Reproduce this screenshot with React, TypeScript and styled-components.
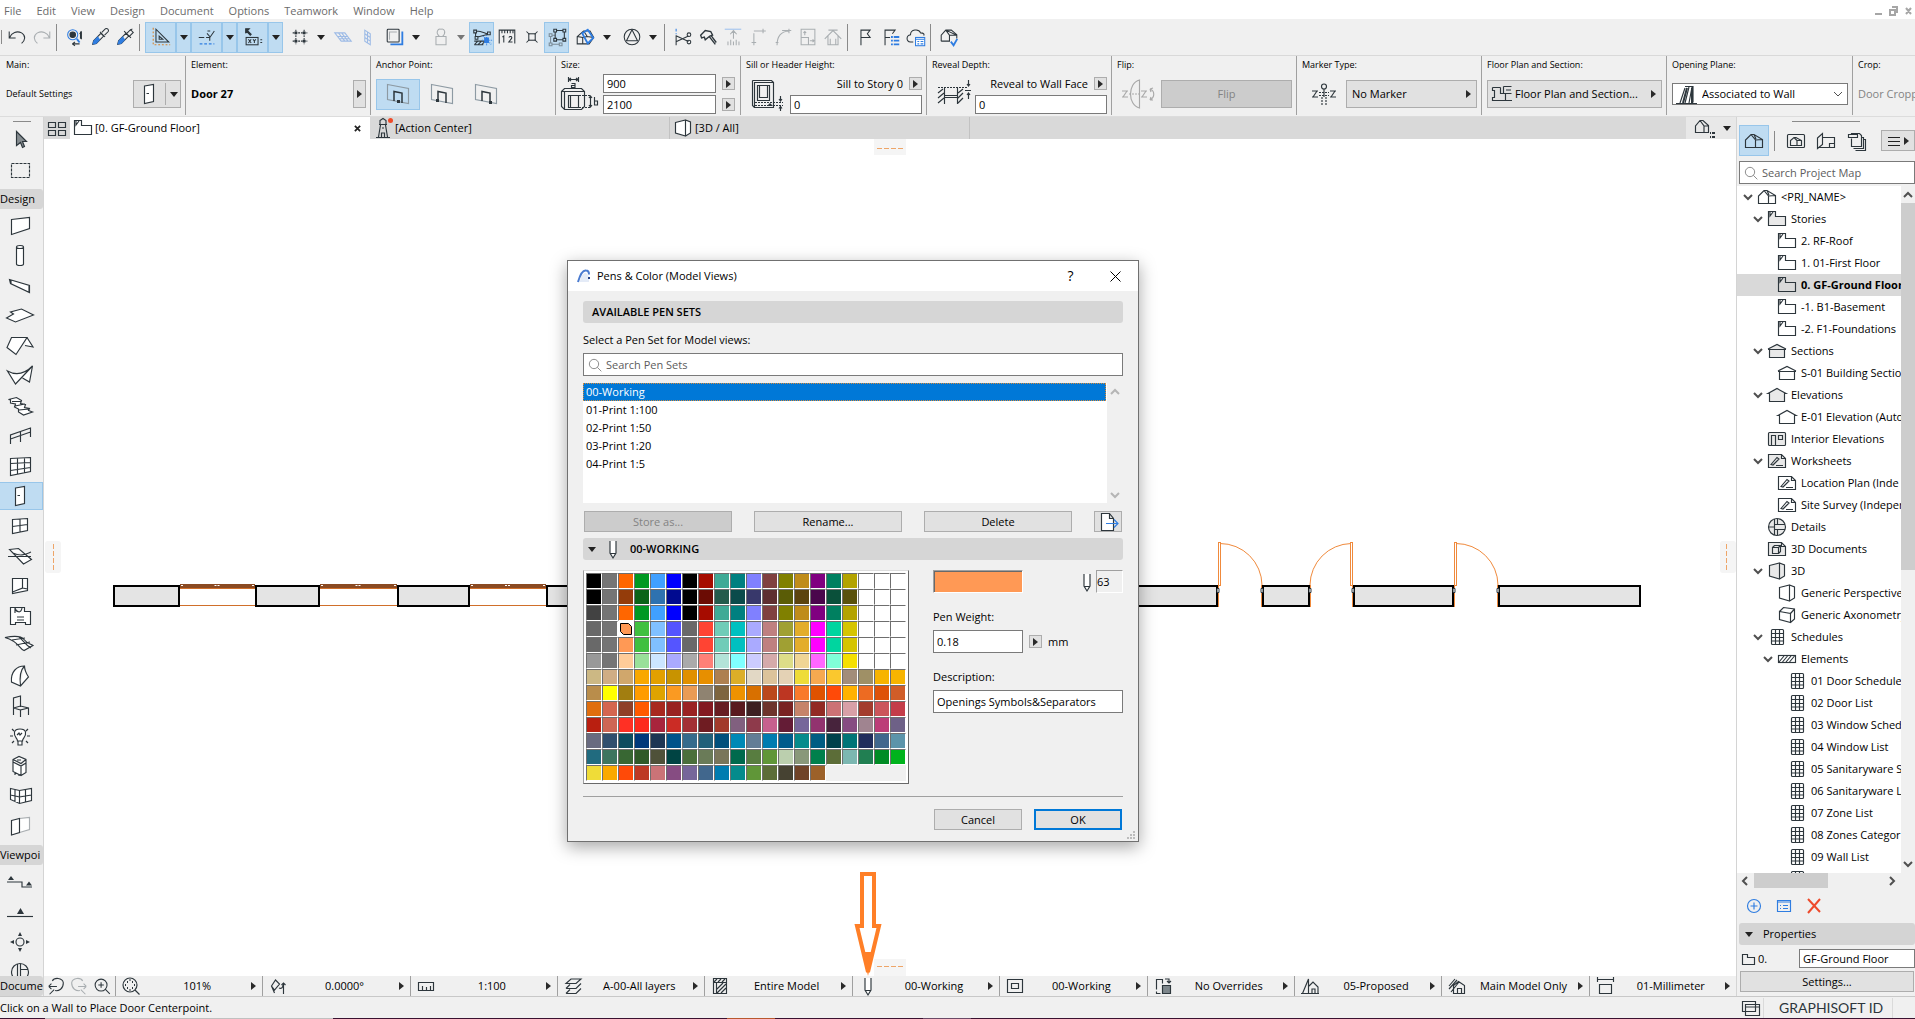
import React, { ReactNode } from "react";
import styled, { createGlobalStyle, css } from "styled-components";

const ink = "#2d363c";
const blue = "#2f7de1";
const pale = "#a9aeb1";
const face = "#f0f0f0";
const font = `"Open Sans", "Noto Sans", sans-serif`;

const Global = createGlobalStyle`
  *, *::before, *::after { box-sizing: border-box; }
  body { margin: 0; overflow: hidden; background: ${face}; }
  body, button, input, select { font-family: ${font}; font-size: 11px; line-height: 16px; color: #000; }
  button { padding: 0; margin: 0; border: 0; background: none; cursor: default; }
  ul { list-style: none; margin: 0; padding: 0; }
  h2, h3 { margin: 0; font-size: 11px; }
`;

/* ---------- icons ---------- */

const icons: Record<string, ReactNode> = {
  undo: <path d="M3.500 6v7h7M4 12.500C6 7 12 5 17 7.500c5 3 4 8 0 11.500" />,
  redo: <path stroke={pale} d="M20.500 6v7h-7M20 12.500C18 7 12 5 7 7.500c-5 3-4 8 0 11.500" />,
  pick: (
    <>
      <circle cx="9.500" cy="9.500" r="5.500" stroke={blue} />
      <circle cx="9.500" cy="9.500" r="3" fill={ink} />
      <path stroke={blue} strokeWidth="2" d="M14 14l3 4" />
      <path d="M17 8.500l2-2v8M18 6v8M9 19.500h8M9 19.500l3-2M9 19.500l3 2" />
    </>
  ),
  dropper: (
    <>
      <path d="M4 20l1-4 8-8 3 3-8 8zM12 6.500l5.500 5.500M14 7l4-4c2-1 4 1 3 3l-4 4" />
      <path fill={blue} stroke={blue} d="M4.500 19.500l1-3.500 4-4 2 3-4 4z" />
    </>
  ),
  syringe: (
    <>
      <path d="M4 20l1-4 8-8 3 3-8 8zM11 5.500l7.500 7.500M14 8l4-4 3 3-4 4M18 5l2-2" />
      <path fill={blue} stroke={blue} d="M4.500 19.500l1-3.500 4-4 2 3-4 4z" />
    </>
  ),
  setsquare: (
    <>
      <path stroke="#d9822b" strokeDasharray="2 2" d="M3.500 2v18.500H22" />
      <path d="M6.500 3.500v14h14zM10 11v3.500h4z" />
    </>
  ),
  snap: (
    <>
      <path d="M3 12.500h6M11 12.500h4V16M12 8l3.500 4L20 5.500M12.500 5.500h3" />
      <path stroke={blue} strokeDasharray="3 2" d="M4 19.500h16" />
    </>
  ),
  tracker: (
    <>
      <path fill={ink} d="M4 3h4l-2 2 4 4-1 1-4-4-1 2z" />
      <rect x="4.500" y="12.500" width="13" height="8" />
      <path d="M7 14.500l3 4M10 14.500l-3 4M12 14.500l1.500 2 1.500-2M13.500 16.500v2M20 15h2M20 18h2" />
    </>
  ),
  grid: (
    <>
      <path strokeDasharray="2 1" d="M4 7.500h16M4 16.500h16M7.500 4v16M16.500 4v16" />
      <path fill={ink} stroke="none" d="M6 6h3v3H6zM15 6h3v3h-3zM6 15h3v3H6zM15 15h3v3h-3z" />
    </>
  ),
  planeH: <path stroke="#9dbbe6" d="M3 7.500h11l7 9H10zM6 11.500h11M7 7.500l7 9M10.500 7.500l7 9M8 14h11" />,
  planeV: <path stroke="#9dbbe6" d="M8.500 4.500l6 4v12l-6-4zM11.500 6.500v12M8.500 8.500l6 4M8.500 12.500l6 4" />,
  layers: (
    <>
      <path stroke={blue} strokeWidth="2" d="M20 6v14H7" />
      <rect x="3.500" y="3.500" width="13" height="14" rx="1" />
      <path stroke={pale} d="M6 15V6.500h8" />
    </>
  ),
  weight: <path stroke={pale} d="M6.500 11.500h11v9h-11zM10.500 11.500c-5-4-2-9 1.500-8 4-1 6 4 1.500 8" />,
  suspend: (
    <>
      <path d="M3 4.500h3v3H3zM18 6.500h3v3h-3zM4.500 11.500h3v3h-3zM6 5.500c6 0 8 2 12 3M5 7.500v4M7.500 12l11-3M3.500 16.500h12M3.500 20.500h10M4 20l4-4M8 20l4-4M12 20l3-3" />
      <path fill={blue} stroke={blue} d="M15 13h4v5h-4z" />
      <path stroke={blue} strokeDasharray="1 1" d="M12 15.500h11M17 10v12M13 11l9 9" />
    </>
  ),
  ruler: <path d="M3.500 19V4.500h17V19M6.500 5v3M9.500 5v3M12.500 5v3M15.500 5v3M18.500 5v3M7 12l1.500-1v7M14 12.500c1-2 4-1 3 1l-3 4h4" />,
  cross: (
    <>
      <rect x="8.500" y="8.500" width="7" height="7" />
      <path d="M6 6l3 3M18 6l-3 3M6 18l3-3M18 18l-3-3" />
    </>
  ),
  group: (
    <>
      <path stroke="#7b8b97" d="M3.500 8.500h3v3h-3zM3.500 18.500h3v3h-3zM14.500 18.500h3v3h-3zM5 12v6M7 20h7M7 10h3" />
      <path d="M8.500 3.500h3v3h-3zM18.500 3.500h3v3h-3zM8.500 13.500h3v3h-3zM18.500 13.500h3v3h-3zM12 5h6M12 15h6M10 7v6M20 7v6" />
    </>
  ),
  cutbox: (
    <>
      <path d="M3.500 11.500l7-6 7 0 4 7-5 7h-13zM10.500 5.500l4 6 7 1M3.500 11.500l6 1v7M9.500 12.500l5-1" />
      <path stroke={blue} strokeWidth="2" d="M9 8l6-4 6 9-6 6z" />
    </>
  ),
  north: (
    <>
      <circle cx="12" cy="12" r="8.500" />
      <path d="M12 4l-6 12h12z" />
    </>
  ),
  scissors: (
    <>
      <path stroke={blue} strokeDasharray="3 2" d="M4.500 3v6" />
      <path d="M4.500 10v11M5 11l13 6M5 17l13-6" />
      <circle cx="18.500" cy="9.500" r="2" />
      <circle cx="18.500" cy="17.500" r="2" />
    </>
  ),
  tools: <path strokeWidth="1.500" d="M4 10l5-5 6 1 2 4-3 1-5 4-1-3-3 1zM13 11l7 9M15 10l6 8" />,
  adjust: (
    <>
      <path stroke="#9dc1ee" d="M3 3.500h18" />
      <path stroke={pale} d="M12.500 5v9M9 9l3.500-4L16 9M6.500 17v4M9.500 15v6M12.500 17v4M15.500 15v6M18.500 17v4" />
    </>
  ),
  corner: <path stroke={pale} d="M7.500 8v13M5 18h5M7.500 5.500h13M17.500 3v5" />,
  fillet: <path stroke={pale} d="M5.500 21c0-10 4-15 13-15.500M4 18h3M11 5h10M18.500 3v5" />,
  resize: <path stroke={pale} d="M4.500 3.500h15v17h-15zM4.500 12.500h8v8M8.500 10V6M7 7.500L8.500 6 10 7.500M14 16h5M17 14.500l1.500 1.500-1.500 1.500" />,
  roofing: <path stroke={pale} d="M3 14l9-9 9 9M6.500 11v9.500h11V11M7 4.500h10M9 14v6M15 14v6" />,
  flag: <path d="M6.500 21V4.500h10l-3 4 3 4h-10" />,
  flagList: (
    <>
      <path d="M5.500 21V4.500h11l-3 4M6 12.500h5" />
      <path stroke={blue} strokeWidth="2" d="M12 12h2M15 12h6M12 16h2M15 16h6M12 20h2M15 20h6" />
    </>
  ),
  cloud: (
    <>
      <path d="M9 17.500H6c-5-1-5-7 0-8 0-6 9-7 11-2 4 0 4 2 3.500 3" />
      <rect x="11.500" y="12.500" width="10" height="9" stroke={blue} fill="#fff" />
      <path stroke={blue} d="M12 14.500h9M13.500 17h2M17 17h3M13.500 19.500h2M17 19.500h3" />
    </>
  ),
  modelCheck: (
    <>
      <path d="M3.500 16.500V10l5-5.500h6l6 5v4M8.500 4.500l4 5.500v6.500h-9M12.500 10h8M8.500 4.500l12 5.500" />
      <path stroke={blue} strokeWidth="2" d="M14 17l3 4 4-7" />
    </>
  ),
  door: <path fill="#fff" d="M7.500 4l9-1.500v17l-9 2zM9.500 11.500h2.500" />,
  anchorMid: (
    <>
      <path stroke="#8d9aa3" d="M1.500 2.500l21 4v15l-21-4z" />
      <path strokeWidth="1.500" d="M8 19V9.500l8 1.500v10" />
      <path fill={ink} stroke="none" d="M11 18h3v3h-3z" />
    </>
  ),
  anchorLeft: (
    <>
      <path stroke="#8d9aa3" d="M1.500 2.500l21 4v15l-21-4z" />
      <path strokeWidth="1.500" d="M8 18V9.500l8 1.500v10" />
      <path fill={ink} stroke="none" d="M6 17h3v3H6z" />
    </>
  ),
  anchorRight: (
    <>
      <path stroke="#8d9aa3" d="M1.500 2.500l21 4v15l-21-4z" />
      <path strokeWidth="1.500" d="M8 19V9.500l8 1.500v8" />
      <path fill={ink} stroke="none" d="M15 19h3v3h-3z" />
    </>
  ),
  quad: <path d="M3.500 6.500h7v5h-7zM13.500 6.500h7v5h-7zM3.500 14.500h7v5h-7zM13.500 14.500h7v5h-7z" />,
  story: <path d="M3.500 4.500h7v5h10v9h-17zM5 5v4l3-4" />,
  storyFill: <path fill="#e9e9e9" d="M3.500 4.500h7v5h10v9h-17zM5 5v4l3-4" />,
  lighthouse: (
    <>
      <path d="M8 8.500h8M9 8V4.500l3-2 3 2V8M9.500 9l-2 12M14.500 9l2 12M5 21.500h14M10.500 21v-4h3v4M11 12h2" />
      <circle cx="19.500" cy="4.500" r="2.500" fill="#f04a28" stroke="none" />
    </>
  ),
  box3d: <path fill="#fff" d="M4.500 6.500l10-2.500v16l-10-3zM14.500 4l5 2v11l-5 3" />,
  box3dFill: <path fill="#e9e9e9" d="M4.500 6.500l10-2.500v16l-10-3zM14.500 4l5 2v11l-5 3" />,
  axo: <path fill="#fff" d="M4.500 8.500l11 2v9l-11-3zM4.500 8.500l4-4 11 1.500v10l-4 3.500M15.500 10.500l4-4.500" />,
  house: <path d="M3.500 18.500V11L9 5.500h3l8.500 5v8zM9 5.500l4.500 5.500v7.500M13.500 11l7-.5M12 5.500l2 4.500" />,
  houseList: (
    <>
      <path d="M4.500 16.500V10L9 4.500h3l5.500 5v7zM9 4.500l4 5.500v6.500M13 10h4.500" />
      <path strokeWidth="2" d="M19 17h1M21 17h3M19 21h1M21 21h3" />
    </>
  ),
  viewMap: (
    <>
      <rect x="3.500" y="5.500" width="17" height="13" rx="1" />
      <path d="M6.500 16.500v-5L10 8.500h2l5.500 3v5zM10 8.500l3 3v5M13 11.500h4.500" />
    </>
  ),
  layoutBook: <path d="M3.500 9l5-4.500v11l-5 4zM8.500 8.500h12v10h-5v-4h5M3.500 18.500h12" />,
  publisher: <path d="M7.500 5.500V4.500h8l2 2v11h-10V9.500M4.500 5.500h9v3h-9zM17.500 8.500h2v11h-10M19.500 10.500h2v11h-10" />,
  section: <path fill="#e9e9e9" d="M3 10l9-4.500 9 4.500M4.500 10.500v8h15v-8zM3 10.500h18" />,
  sectionItem: <path fill="#fff" d="M3 10l9-4.500 9 4.500M4.500 10.500v8h15v-8zM3 10.500h18" />,
  elevation: <path fill="#e9e9e9" d="M3 10.500h1.500v8h15v-8H21L12 5.500z" />,
  elevationItem: <path fill="#fff" d="M3 10.500h1.500v8h15v-8H21L12 5.500z" />,
  interior: (
    <>
      <rect x="3.500" y="5.500" width="17" height="13" rx="1" fill="#e9e9e9" />
      <path d="M6.500 18.500v-10h4v10M13.500 8.500h4v4h-4z" />
    </>
  ),
  worksheet: <path fill="#e9e9e9" d="M3.500 5.500h13l4 4v9h-17zM6 15.500l6-7 2 1.500-6 6zM11 16.500h7M16.500 5.500v4h4" />,
  worksheetItem: <path fill="#fff" d="M3.500 5.500h13l4 4v9h-17zM6 15.500l6-7 2 1.500-6 6zM11 16.500h7M16.500 5.500v4h4" />,
  detail: (
    <>
      <circle cx="12" cy="12" r="8.500" fill="#e9e9e9" />
      <path d="M9.500 4v16M12.500 4v5.500M12.500 14.500V20M9.500 9.500h10.500M9.500 14.500h10.500M4 12h5" />
    </>
  ),
  doc3d: <path fill="#e9e9e9" d="M3.500 5.500h13l4 4v9h-17zM7.500 10.500h6v6h-6zM7.500 10.500l2-2h6l-2 2M15.500 8.500v6l-2 2M16.500 5.500v4h4" />,
  schedule: (
    <>
      <rect x="6.500" y="4.500" width="12" height="15" rx="1" />
      <path d="M6.500 8.500h12M6.500 12.500h12M6.500 16h12M10.500 4.500v15M14.500 4.500v15" />
    </>
  ),
  hatch: (
    <>
      <rect x="3.500" y="8.500" width="17" height="7" />
      <path d="M4 15l5-6M7.500 15l5-6M11 15l5-6M14.500 15l5-6" />
    </>
  ),
  arrow: <path fill="#858c90" d="M8.500 3.500v14l4-3 2 5 2-1-2-5h4z" />,
  marquee: <path strokeDasharray="3 1" d="M3.500 5.500h18v14h-18z" />,
  wall: <path fill="#fff" d="M3.500 5.500l18-2v11l-18 6z" />,
  column: <path fill="#fff" d="M8.500 3v17c0 2 7 2 7 0V3c0-2-7-2-7 0c0 2 7 2 7 0" />,
  beam: <path fill="#fff" d="M1.500 5.500l20 6v7l-19-9zM3 6v4M21 12v6" />,
  slab: <path fill="#fff" d="M-1.500 14l7-4-3-2 11-3 12 6-18 7z" />,
  roof: <path fill="#fff" d="M3.500 3.500h15.500l-11 17-9-7zM19 3.500l6 9.500-8-1.500" />,
  shell: <path fill="#fff" d="M-.5 7c9 5 18 2 25-5L7.500 20zM24.500 2l-3 16-7-4" />,
  stair: <path fill="#fff" d="M.5 5.500l8-2 5 3-1 3 5 1-1 3 5 1-1 2 4 1.500-9 3-5-3 0-3-4-2 1-3-5-1 0-3zM4 7.500h9M7 12l10-2M11 16l10-1" />,
  railing: <path d="M2.500 20v-9l20-7v9M2.500 15l20-7M12.500 8v10" />,
  curtain: <path fill="#fff" d="M2.500 4.500l20-1v14l-20 4zM9.500 4v16M16.500 4v14.500M2.500 9.500l20-1M2.500 16.500l20-3" />,
  window: <path fill="#fff" d="M4.500 5.500l15-1v12l-15 3zM12 5v13.500M4.500 12.500l15-2" />,
  skylight: <path fill="#fff" d="M1.500 5.500l9-1 13 11-8 4.500zM5 9c8 4 13 1 18-1M0 12.500l23 0" />,
  opening: <path fill="#fff" d="M4.500 4.500h15v12l-15 3zM14.500 4.500v9.500l-10 4M14.500 14l5 1" />,
  zone: <path fill="#fff" d="M2.500 3.500h14v4h6v13h-5v-2h-10v2h-5zM9 13h7M9 16h7M7 4c1 4 6 6 7 0M7 4v5" />,
  mesh: <path fill="#fff" d="M-3 3.500c10-2 16-2 19 2s6 4 9 6l-9 5c-5-2-5-9-19-13zM4 6l13-2M8 11l14-3M11 3c4 3 6 8 12 11" />,
  morph: <path fill="#fff" d="M3.500 18c-1-10 5-16 13-16 0 4 2 8 4 11l-8 9zM16.500 2c-5 5-5 12-4 20" />,
  chair: <path d="M5.500 21V4l7-2v11M5.500 14l7-2 8 2v7M12.500 23v-7l8-2M5.500 14l7 2" />,
  lamp: (
    <>
      <path fill="#fff" d="M9.500 17c0-3-4-4-3-9 1-4 10-4 11 0 1 5-3 6-3 9zM10 17v4h4v-4M9 11l2-2 1 2 2-2" />
      <path d="M2 12h3M19 12h3M4 5l2 2M20 5l-2 2M4 19l2-2M20 19l-2-2" />
    </>
  ),
  equipment: <path fill="#fff" d="M5 5.500l6-3 7 3v13l-5 3-8-4zM5 8l8 4 5-3M13 12v9M5 5.500l8 4 5-4M9 6h4M7 18v3M11 20v2" />,
  curtainCorner: <path fill="#fff" d="M2.500 4.500l9 2 12-2v12l-12 3-9-4zM11.500 6.500v13M7 5.500v12.500M17.500 5.500v12.500M2.500 11l9 2 12-2" />,
  panel: (
    <>
      <path stroke={pale} fill="#fff" d="M11.500 4.500l10-1v12l-10 3" />
      <path fill="#fff" d="M3.500 6.500l8-2v14l-8 2.500z" />
    </>
  ),
  secTool: (
    <>
      <path d="M-1 12h15v5h10" />
      <path fill={ink} stroke="none" d="M0 10l3-4 3 4zM18 15.500l3-4 3 4z" />
    </>
  ),
  elevTool: (
    <>
      <path d="M-1 16.500h26" />
      <path fill={ink} stroke="none" d="M9 14l3.500-6 3.500 6z" />
    </>
  ),
  ieTool: (
    <>
      <circle cx="12" cy="12" r="4" />
      <path fill={ink} stroke="none" d="M10 6l2-4 2 4zM10 18l2 4 2-4zM6 10l-4 2 4 2zM18 10l4 2-4 2z" />
    </>
  ),
  wsTool: (
    <>
      <circle cx="12" cy="12" r="8.500" />
      <path d="M9.500 4v16M12.500 4v16M12.500 9.500h7.500" />
    </>
  ),
  size: (
    <>
      <path d="M7.500 1v5M17.500 1v5M8 3.500h9M10 2L8 3.500 10 5M15 2l2 1.500L15 5M10.500 7.500h3.500v4h-3.500v-2h3.500" />
      <path d="M.5 15.500l3-3h17l3 3v15l-3 3h-17l-3-3zM.5 15.500h23M3.500 15.500v18M7.500 19.500h10v12h-10zM9.500 19.500v12" />
      <path strokeDasharray="2 1" d="M18 19.500h12M18 31.500h12" />
      <path d="M29.500 20v11M28 22l1.500-2 1.500 2M28 29l1.500 2 1.500-2M33.500 21v8h3v-4h-3" />
    </>
  ),
  sill: (
    <>
      <path d="M3.500 5.500h19v25h-19zM1.500 3.500h19l2 2M1.500 3.500v25l2 2M6.500 8.500h12v15h-12zM8.500 8.500h8v12h-8z" />
      <path strokeDasharray="2 1" d="M4 25.500h28M4 28.500h28" />
      <path d="M29.500 19v5M28 22l1.500 2 1.500-2M29.500 30v4M28 31.500l1.500-2 1.500 2" />
      <path fill={ink} stroke="none" d="M16 29l3-3 3 3z" />
    </>
  ),
  reveal: (
    <>
      <path strokeDasharray="2 1" d="M1 8.500h30" />
      <path d="M7.500 9v16M20.500 9v16M7.500 16.500h13M7.500 18.500h13M1 14l5-4M1 19l6-5M1 24l6-5M21 14l5-4M21 19l5-5M21 24l5-5M31.500 1v6M30 5l1.500 2L33 5M31.500 14v6M30 16l1.500-2 1.500 2M28 11.500h6" />
    </>
  ),
  flip: (
    <g stroke="#a8a8a8">
      <path d="M1 15h6M1 21h6M6 15l-4 6M20 15h6M20 21h6M25 15l-4 6M18.500 4v28c-12-3-12-25 0-28z" />
      <path strokeDasharray="2 1" d="M8 18h12" />
      <path d="M29 13c5 2 5 8 0 11M29 13l3-1M29 13l1 3M29 24l3 0M29 24l1-3" />
    </g>
  ),
  marker: (
    <>
      <path d="M1 8h6M1 14h6M6 8l-4 6M19 8h6M19 14h6M24 8l-4 6M13 6v8" />
      <path strokeDasharray="2 1" d="M8 9.500h10M8 12.500h10M11 14v8M15 14v8" />
      <circle cx="13" cy="3.500" r="2.500" />
    </>
  ),
  planSection: <path d="M2.500 5.500h8M2.500 5.500v3l2 0v7l-2 0v3h8M13.500 4.500h8M13.500 4.500v7h8M15.500 11.500v7M10 18.500h12M21 8h-5M10.500 5.500v6h3" />,
  openingPlane: (
    <>
      <path d="M1 21.500h21M5 21l5-15M10 21l4-16M14 21l3-16M10 4.500h8v16" />
      <path strokeWidth="2" d="M8 21l4-15M17 6v15" />
    </>
  ),
  zoomBack: <path d="M4 12.500h9M4 12.500l3-3M4 12.500l3 3M8 6.500c2-4 11-4 12 2 0 7-5 9-9 8.500M10 16l-5 5" />,
  zoomFwd: <path stroke={pale} d="M20 12.500h-9M20 12.500l-3-3M20 12.500l-3 3M16 6.500c-2-4-11-4-12 2 0 7 5 9 9 8.500M14 16l5 5" />,
  zoomIn: (
    <>
      <circle cx="11" cy="11" r="6.500" />
      <path d="M15.500 15.500l5 5M11 8v6M8 11h6" />
    </>
  ),
  fit: (
    <>
      <circle cx="11" cy="11" r="7" />
      <path d="M16 16l4.500 4.500" />
      <path strokeWidth="2" d="M8 8h1M13 8h1M8 14h1M13 14h1M6 11h1M15 11h1M10.500 6h1M10.500 16h1" />
    </>
  ),
  orient: <path d="M5.500 12l4-6 4 4-5 6zM8.500 19l-3-7M17.500 20V9M15.500 11l2-2 2 2M13 14c2 1 4 0 4-3" />,
  scale: <path d="M4.500 8.500h15v8h-15zM8.500 12v4M12.500 13v3M16.500 12v4" />,
  layerStack: <path d="M5 9.500l5-4.500h10l-5 4.500zM5 14.500l4-4M5 14.500h10l5-5M5 19.500l4-4M5 19.500h10l5-5" />,
  partial: <path d="M5.500 4.500h13v15h-13zM5.500 8.500h13M8.500 8.500v11M6 8l3-3M10 8l3-3M14 8l3-3M9 15l6-6M9 19l9-9M13 19l5-5" />,
  pen: <path fill="#fff" d="M9 4v12l3 5 3-5V4M9 16.500h6" />,
  frame: <path d="M4.500 5.500h15v13h-15zM8.500 9.500h7v5h-7z" />,
  override: (
    <>
      <path d="M5.500 15.500v-10h6v4M14 5h4v4M16 7l2 2 2-2" />
      <path fill="#7d868b" d="M11.500 11.500h8v8h-8z" />
      <path d="M5.500 17.500v2h4" />
    </>
  ),
  reno: <path d="M4.500 19.500L10.500 5v14.500zM11 12l4-4 5 5v6.500h-9M14 19v-4h3v4M3 19.500h18" />,
  structure: <path d="M4 12l6-7M4 15l8-9M6 18l8-10M8.500 19.500v-8l5-4 6 4v8zM12.500 19.500v-5h4v5" />,
  dimension: <path d="M4.500 5.500h16M4.500 3v5M20.500 3v5M6.500 10.500h12v9h-12z" />,
  windows: <path fill={face} d="M3.500 5.500h13v10h-13zM6.500 8.500h14v11h-14zM6.500 11h14" />,
  exportDoc: (
    <>
      <path fill="#fff" d="M5.500 3.500h8l4 5v12h-12zM13.500 3.500v5h4" />
      <path stroke={blue} d="M10 13.500h12M18 9.500l4 4-4 4" />
    </>
  ),
  search: (
    <g stroke="#6d6d6d">
      <circle cx="10.500" cy="10.500" r="7" />
      <path d="M15.500 15.500l6 6" />
    </g>
  ),
  plus: (
    <g stroke={blue}>
      <circle cx="12" cy="12" r="6.500" />
      <path d="M12 8.500v7M8.500 12h7" />
    </g>
  ),
  props: (
    <g stroke={blue}>
      <path d="M5.500 6.500h13v11h-13zM5.500 8h13M8 11.500h1M11 11.500h5M8 14.500h1M11 14.500h5" />
    </g>
  ),
  remove: <path stroke="#ee4a2b" strokeWidth="2" d="M6 5l12 13M18 5L6 19" />,
  folder: <path d="M5.500 7.500h5v3h7v7h-12z" />,
};

const Svg = styled.svg`
  display: block;
  flex: none;
  overflow: visible;
`;

type IconProps = { name: string; size?: number; w?: number; h?: number; narrow?: boolean };

const Icon = ({ name, size = 24, w, h, narrow }: IconProps) => (
  <Svg
    width={narrow ? 18 : w ?? size}
    height={narrow ? 24 : h ?? size}
    viewBox={narrow ? "3 0 18 24" : w && h ? `0 0 ${w} ${h}` : "0 0 24 24"}
    fill="none"
    stroke={ink}
    strokeWidth="1.150"
    aria-hidden="true"
  >
    {icons[name]}
  </Svg>
);

const Caret = styled.span<{ $dir?: "down" | "right"; $dim?: boolean }>`
  flex: none;
  width: 0;
  height: 0;
  ${({ $dir = "down", $dim }) =>
    $dir === "down"
      ? css`
          border: 4px solid transparent;
          border-top: 5px solid ${$dim ? "#777" : "#222"};
          border-bottom: 0;
        `
      : css`
          border: 4px solid transparent;
          border-left: 5px solid #2a2a2a;
          border-right: 0;
        `}
`;

type ChevronProps = { dir: "up" | "down" | "left" | "right"; color?: string; weight?: number };

const Chevron = ({ dir, color = "#505050", weight = 2 }: ChevronProps) => {
  const d = { up: "M1 7l4-4 4 4", down: "M1 3l4 4 4-4", left: "M7 1L3 5l4 4", right: "M3 1l4 4-4 4" }[dir];
  return (
    <Svg width="10" height="10" viewBox="0 0 10 10" fill="none" stroke={color} strokeWidth={weight} aria-hidden="true">
      <path d={d} />
    </Svg>
  );
};

/* ---------- shell ---------- */

const Shell = styled.div`
  display: flex;
  flex-direction: column;
  height: 100vh;
  background: ${face};
  overflow: hidden;
`;

const MenuBar = styled.nav`
  display: flex;
  align-items: center;
  height: 19px;
  padding: 3px 2px 0 4px;
  gap: 15px;
  background: #fff;
  flex: none;
`;

const MenuItem = styled.button`
  color: #6b6b6b;
`;

const WindowControls = styled.div`
  display: flex;
  margin-left: auto;
`;

const ToolBar = styled.div`
  display: flex;
  align-items: center;
  height: 37px;
  padding-left: 1px;
  border-bottom: 1px solid #d9d9d9;
  flex: none;
`;

const Grip = styled.span`
  width: 1px;
  height: 14px;
  margin-right: 2px;
  background: #8a8a8a;
`;

const Rule = styled.span<{ $wide?: boolean }>`
  width: 1px;
  height: ${({ $wide }) => ($wide ? 20 : 27)}px;
  margin: ${({ $wide }) => ($wide ? "0 6px 0 5px" : "0 5px 0 2px")};
  background: #8a8a8a;
  flex: none;
`;

const Tool = styled.button<{ $on?: boolean; $w?: number; $gap?: number }>`
  display: flex;
  align-items: center;
  justify-content: center;
  flex: none;
  width: ${({ $w = 25 }) => $w}px;
  height: 31px;
  margin-left: ${({ $gap = 0 }) => $gap}px;
  border: 1px solid ${({ $on }) => ($on ? "#98c6ea" : "transparent")};
  background: ${({ $on }) => ($on ? "#bfdcf2" : "transparent")};
`;

/* ---------- info box ---------- */

const InfoBar = styled.div`
  display: flex;
  height: 61px;
  padding-left: 1px;
  border-bottom: 1px solid #dcdcdc;
  overflow: hidden;
  flex: none;
`;

const Section = styled.section`
  display: flex;
  flex-direction: column;
  flex: 0 0 185px;
  height: 59px;
  padding: 0 4px 0 5px;
  border-right: 1px solid #a0a0a0;
  white-space: nowrap;
`;

const SectionLabel = styled.span`
  font-size: 9px;
  line-height: 18px;
  height: 18px;
`;

const SectionBody = styled.div<{ $gap?: number; $end?: boolean }>`
  display: flex;
  align-items: center;
  justify-content: ${({ $end }) => ($end ? "space-between" : "flex-start")};
  gap: ${({ $gap = 0 }) => $gap}px;
  height: 40px;
`;

const Small = styled.span`
  font-size: 9px;
`;

const Push = styled.button<{ $w?: number; $h?: number; $off?: boolean; $primary?: boolean; $grow?: boolean; $start?: boolean }>`
  display: flex;
  align-items: center;
  justify-content: ${({ $start }) => ($start ? "flex-start" : "center")};
  gap: 4px;
  flex: ${({ $grow }) => ($grow ? "1" : "none")};
  width: ${({ $w }) => ($w ? `${$w}px` : "auto")};
  height: ${({ $h = 21 }) => $h}px;
  padding: ${({ $start }) => ($start ? "0 5px" : "0")};
  border: ${({ $primary }) => ($primary ? "2px solid #0078d7" : "1px solid #adadad")};
  background: ${({ $off }) => ($off ? "#cccccc" : "#e1e1e1")};
  color: ${({ $off }) => ($off ? "#838383" : "#000")};
  white-space: nowrap;
`;

const PushDivider = styled.span`
  width: 1px;
  height: 22px;
  background: #adadad;
`;

const Spacer = styled.span`
  flex: 1;
`;

const Field = styled.input<{ $w?: number; $h?: number }>`
  width: ${({ $w }) => ($w ? `${$w}px` : "100%")};
  height: ${({ $h = 19 }) => $h}px;
  padding: 0 3px;
  border: 1px solid #7a7a7a;
  background: #fff;
  outline: 0;
  min-width: 0;
`;

const Stack = styled.div`
  display: flex;
  flex-direction: column;
  gap: 2px;
`;

const Line = styled.div`
  display: flex;
  align-items: center;
  justify-content: flex-end;
  gap: 6px;
  height: 19px;
`;

const SelectBox = styled.label`
  display: flex;
  align-items: center;
  width: 176px;
  height: 22px;
  padding: 0 4px 0 2px;
  border: 1px solid #7a7a7a;
  background: #fff;
`;

const Select = styled.select`
  appearance: none;
  flex: 1;
  min-width: 0;
  padding: 0 0 0 3px;
  border: 0;
  background: none;
  outline: 0;
`;

const Faded = styled.span`
  color: #838383;
`;

const Strong = styled.strong`
  font-weight: 700;
`;

/* ---------- work area ---------- */

const Main = styled.main`
  display: flex;
  flex: 1;
  min-height: 0;
`;

const ToolBox = styled.aside`
  display: flex;
  flex-direction: column;
  flex: none;
  width: 44px;
  border-right: 1px solid #d4d4d4;
`;

const ToolList = styled.div`
  display: flex;
  flex-direction: column;
  flex: 1;
  min-height: 0;
  overflow: hidden;
`;

const Handle = styled.span<{ $w: number }>`
  width: ${({ $w }) => $w}px;
  height: 1px;
  margin: 4px auto 3px;
  background: #8a8a8a;
  flex: none;
`;

const Group = styled.h3<{ $last?: boolean }>`
  flex: none;
  height: 20px;
  margin: ${({ $last }) => ($last ? "0" : "4px 0 2px")};
  border-radius: 0 3px 3px 0;
  background: #d6d6d6;
  font-weight: 400;
  line-height: 20px;
  overflow: hidden;
`;

const BoxTool = styled.button<{ $on?: boolean }>`
  display: flex;
  align-items: center;
  justify-content: center;
  flex: none;
  width: 43px;
  height: ${({ $on }) => ($on ? 28 : 30)}px;
  padding-right: 3px;
  margin: ${({ $on }) => ($on ? "1px 0" : "0")};
  border: 1px solid ${({ $on }) => ($on ? "#98c6ea" : "transparent")};
  border-left: 0;
  background: ${({ $on }) => ($on ? "#bfdcf2" : "transparent")};
`;

const Centre = styled.div`
  display: flex;
  flex-direction: column;
  flex: 1;
  min-width: 0;
`;

const Tabs = styled.div`
  display: flex;
  height: 22px;
  background: #d9d9d9;
  flex: none;
`;

const TabIcon = styled.button<{ $w: number; $light?: boolean }>`
  display: flex;
  align-items: center;
  justify-content: center;
  gap: 8px;
  width: ${({ $w }) => $w}px;
  margin-left: ${({ $light }) => ($light ? "auto" : "0")};
  background: ${({ $light }) => ($light ? "#e8e8e8" : "transparent")};
`;

const Tab = styled.div<{ $on?: boolean }>`
  display: flex;
  align-items: center;
  gap: 3px;
  width: 300px;
  padding: 0 8px 0 4px;
  border-right: 1px solid ${({ $on }) => ($on ? "#fff" : "#c2c2c2")};
  background: ${({ $on }) => ($on ? "#fff" : "transparent")};
`;

const Close = styled.button`
  margin-left: auto;
`;

const Canvas = styled.div`
  position: relative;
  flex: 1;
  min-height: 0;
  background: #fff;
  overflow: hidden;
`;

const Plan = styled.svg`
  display: block;
  width: 100%;
  height: 100%;
`;

const StatusBar = styled.div`
  display: flex;
  align-items: center;
  height: 20px;
  flex: none;
`;

const ZoomTools = styled.div`
  display: flex;
  align-items: center;
  width: 71px;
  height: 20px;
  flex: none;
`;

const Cell = styled.button`
  display: flex;
  align-items: center;
  flex: 1;
  min-width: 0;
  height: 20px;
  padding: 0 6px 0 3px;
  border-left: 1px solid #a0a0a0;
  white-space: nowrap;
`;

const CellText = styled.span`
  flex: 1;
  text-align: center;
`;

/* ---------- navigator ---------- */

const Navigator = styled.aside`
  display: flex;
  flex-direction: column;
  flex: none;
  width: 179px;
  border-left: 1px solid #d4d4d4;
`;

const NavTools = styled.div`
  display: flex;
  align-items: center;
  height: 31px;
  padding-left: 2px;
  flex: none;
`;

const SearchBox = styled.label<{ $m: string }>`
  display: flex;
  align-items: center;
  gap: 3px;
  height: 23px;
  margin: ${({ $m }) => $m};
  padding: 0 3px;
  border: 1px solid #7a7a7a;
  background: #fff;
  flex: none;
`;

const SearchInput = styled.input`
  flex: 1;
  min-width: 0;
  padding: 0;
  border: 0;
  outline: 0;
  background: none;
  &::placeholder {
    color: #5c5c5c;
    opacity: 1;
  }
`;

const TreeWrap = styled.div`
  display: flex;
  flex: 1;
  min-height: 0;
`;

const Tree = styled.ul`
  flex: 1;
  min-width: 0;
  background: #fff;
  overflow: hidden;
`;

const Node = styled.li<{ $depth: number; $on?: boolean }>`
  display: flex;
  align-items: center;
  height: 22px;
  padding-left: ${({ $depth }) => 6 + $depth * 10}px;
  background: ${({ $on }) => ($on ? "#d9d9d9" : "transparent")};
  font-weight: ${({ $on }) => ($on ? 700 : 400)};
  white-space: nowrap;
`;

const NodeArrow = styled.span`
  width: 15px;
  flex: none;
`;

const NodeText = styled.span`
  padding-left: 5px;
`;

const VScroll = styled.div`
  display: flex;
  flex-direction: column;
  align-items: center;
  width: 14px;
  padding: 4px 0;
  flex: none;
`;

const VThumb = styled.span`
  width: 14px;
  height: 367px;
  margin: 3px 0 auto;
  background: #cdcdcd;
`;

const HScroll = styled.div`
  display: flex;
  align-items: center;
  height: 15px;
  padding: 0 18px 0 3px;
  flex: none;
`;

const HThumb = styled.span`
  width: 74px;
  height: 15px;
  margin: 0 auto 0 4px;
  background: #cdcdcd;
`;

const NavActions = styled.div`
  display: flex;
  align-items: center;
  gap: 6px;
  height: 35px;
  padding-left: 5px;
  flex: none;
`;

const PropsHead = styled.h3`
  display: flex;
  align-items: center;
  gap: 10px;
  height: 22px;
  margin: 0 0 4px 2px;
  padding-left: 6px;
  border-radius: 3px;
  background: #d4d4d4;
  font-weight: 400;
  flex: none;
`;

const PropRow = styled.label`
  display: flex;
  align-items: center;
  height: 19px;
  padding-left: 3px;
  flex: none;
`;

const PropNum = styled.span`
  flex: none;
  width: 41px;
`;

const SettingsRow = styled.div`
  display: flex;
  padding: 3px 1px 4px 3px;
  flex: none;
`;

const Footer = styled.footer`
  display: flex;
  align-items: center;
  height: 22px;
  border-top: 1px solid #c8c8c8;
  flex: none;
`;

const Brand = styled.div`
  display: flex;
  align-items: center;
  width: 130px;
  height: 20px;
  margin: 0 22px 0 3px;
  padding-left: 15px;
  border: solid #dadada;
  border-width: 0 1px;
  font-family: Lato, sans-serif;
  font-size: 14px;
  color: #3c464c;
  white-space: nowrap;
`;

const BrandMark = styled.span`
  font-weight: 400;
  color: #2d363c;
`;

const Edge = styled.div`
  height: 1px;
  flex: none;
  background: linear-gradient(90deg, #3a1230 45px, #c0c0c0 45px 333px, #3a1230 333px 727px, #b8582e 727px 775px, #3a1230 775px 923px, #6b4a66 923px 971px, #3a1230 971px);
`;

/* ---------- dialog ---------- */

const Dialog = styled.div`
  position: absolute;
  left: 523px;
  top: 121px;
  width: 572px;
  border: 1px solid #707070;
  background: ${face};
  box-shadow: 0 5px 16px rgba(0, 0, 0, 0.35);
`;

const TitleBar = styled.div`
  display: flex;
  align-items: center;
  gap: 6px;
  height: 30px;
  padding-left: 9px;
  background: #fff;
`;

const TitleText = styled.h2`
  flex: 1;
  font-weight: 400;
`;

const TitleButton = styled.button`
  width: 45px;
  display: flex;
  justify-content: center;
  font-size: 14px;
`;

const Controls = styled.div`
  display: flex;
  align-items: center;
`;

const Body = styled.div`
  padding: 10px 15px 11px;
`;

const Bar = styled.h3`
  display: flex;
  align-items: center;
  gap: 8px;
  height: 22px;
  padding-left: 5px;
  border-radius: 3px;
  background: #d6d6d6;
  font-weight: 600;
`;

const BarText = styled.span<{ $pad?: number }>`
  padding-left: ${({ $pad = 0 }) => $pad}px;
`;

const Caption = styled.span<{ $top: number }>`
  display: block;
  margin: ${({ $top }) => $top}px 0 3px;
  line-height: 20px;
`;

const ListWrap = styled.div`
  display: flex;
  height: 120px;
  margin: 7px 0 8px;
`;

const List = styled.ul`
  flex: 1;
  background: #fff;
`;

const Item = styled.li<{ $on?: boolean }>`
  height: 18px;
  margin-right: 1px;
  padding: 0 2px;
  line-height: 16px;
  border: 1px ${({ $on }) => ($on ? "dotted #d98b3a" : "solid transparent")};
  background: ${({ $on }) => ($on ? "#0078d7" : "transparent")};
  color: ${({ $on }) => ($on ? "#fff" : "#000")};
`;

const ListScroll = styled.div`
  display: flex;
  flex-direction: column;
  justify-content: space-between;
  align-items: center;
  width: 16px;
  padding: 4px 0 3px;
`;

const Actions = styled.div`
  display: flex;
  justify-content: space-between;
  margin: 0 1px 6px;
`;

const PenArea = styled.div`
  display: flex;
  gap: 24px;
  margin-top: 10px;
`;

const PenGrid = styled.div`
  flex: none;
  border: 1px solid;
  border-color: #dcdcdc #696969 #696969 #a0a0a0;
`;

const PenCells = styled.div`
  display: grid;
  grid-template-columns: repeat(20, 16px);
  grid-auto-rows: 16px;
  border: 2px solid #fff;
`;

const Pen = styled.button<{ $c: string; $on?: boolean }>`
  display: flex;
  border: 1px solid;
  border-color: ${({ $on }) => ($on ? "#fff" : "#6e6e6e #fff #fff #6e6e6e")};
  background: ${({ $c, $on }) => ($on ? "#fff" : $c)};
`;

const PenSide = styled.div`
  flex: 1;
`;

const PenTop = styled.div`
  display: flex;
  align-items: center;
  height: 23px;
`;

const Swatch = styled.button`
  width: 90px;
  height: 23px;
  margin-right: auto;
  border: 1px solid;
  border-color: #a0a0a0 #fff #fff #a0a0a0;
  box-shadow: inset 1px 1px #696969;
  background: #ff9955;
`;

const PenNumber = styled.output`
  width: 27px;
  height: 23px;
  line-height: 22px;
  border: 1px solid;
  border-color: #a0a0a0 #fff #fff #a0a0a0;
`;

const Inline = styled.div`
  display: flex;
  align-items: center;
  gap: 6px;
`;

const Divider = styled.hr`
  margin: 12px 0;
  border: 0;
  border-top: 1px solid #a0a0a0;
`;

const Confirm = styled.div`
  display: flex;
  justify-content: flex-end;
  gap: 12px;
  padding-right: 1px;
`;

const Resize = styled.svg`
  position: absolute;
  right: 3px;
  bottom: 2px;
`;

/* ---------- data ---------- */

const menus = ["File", "Edit", "View", "Design", "Document", "Options", "Teamwork", "Window", "Help"];

const basic =
  "ff6600 009922 40a0ff 0000ff 000000 a60c00 3faa96 008080 8080ff 804040 808000 bf8c1a 800080 008060 b3a300 ffffff ffffff ffffff";
const soft =
  "ff9955 40c040 80c0ff 5555ff 696969 ff4433 70ccb8 00c0c0 aaaaff bf8080 a0a033 e3ad2b ff00ff 00d59f d5c400 ffffff ffffff ffffff";
const pens = [
  "000000 757575 " + basic,
  "000000 757575 943c0a 0a6418 2e72b0 000a90 000000 6b0c04 235b4c 0b4b4b 38386b 5e2e30 5a5c06 5c440e 4a064c 0a503a 5a520c ffffff ffffff ffffff",
  "424242 757575 " + basic,
  "696969 757575 " + soft,
  "696969 757575 " + soft,
  "999999 757575 ffcc99 99e099 cce6ff aaaaff aaaaaa ff8077 b3e3d8 80ffff ccccff d5aaaa dddd88 f0d595 ff66ff 80ffd8 f5e000 ffffff ffffff ffffff",
  "ccb884 d0ad85 d0a76c f9a800 e2a000 c89300 e09000 e78f00 ae8050 dcae28 e2d8c5 dcc39b e4d2b5 eedc38 f6a950 fac82e a28d7a 9f9066 f7b400 f7b400",
  "b98d4b ffff00 a27e10 ff9c00 dea300 fa9a22 e99b55 8f8371 7e653f ee9200 d87000 ba481c bd3622 f97a2b df5200 ff4a08 ffb200 ed6b22 de5208 d05d28",
  "e06e0e d4664f 8f3f27 ff5a00 a8291f 992322 9a2323 831a22 671d22 591a1f 3d2022 6d342c 792423 c6846a 922b24 cc7275 d8a0a7 a33c2d cb555b c43d49",
  "b91f10 ce6654 ff3024 fd2a1c a8243c cb2c25 a33035 6f1c22 a23a2b 81607f 8e3a4b c6608e 641c36 76669a 92336f 47233c 864c82 a08490 bc3d78 6e6187",
  "696b80 304f6e 0e4c5f 00387b 1d3654 00538a 366b8c 22607a 004f7c 0089b6 637d96 007cb0 005b8c 058b8c 005d83 00414b 007577 212d5c 41678d 5c94aa",
  "216b7f 3d755f 386733 2f5a28 4f5139 004443 4a6f3b 6a7b58 7a765a 006a4d 587d40 609638 bbcfae 89987a 00804c 5c6d38 7cb7b1 217f52 008c25 00b31c",
  "efdc38 faa900 ff4a08 bd3924 cb7377 864c82 76669a 41678d 007cb0 058b8c 609638 5c6d38 464232 704328 9c6129",
]
  .join(" ")
  .split(" ");

type TreeRow = [depth: number, open: boolean, icon: string, text: string];
const tree: TreeRow[] = [
  [0, true, "house", "<PRJ_NAME>"],
  [1, true, "storyFill", "Stories"],
  [2, false, "story", "2. RF-Roof"],
  [2, false, "story", "1. 01-First Floor"],
  [2, false, "story", "0. GF-Ground Floor"],
  [2, false, "story", "-1. B1-Basement"],
  [2, false, "story", "-2. F1-Foundations"],
  [1, true, "section", "Sections"],
  [2, false, "sectionItem", "S-01 Building Section"],
  [1, true, "elevation", "Elevations"],
  [2, false, "elevationItem", "E-01 Elevation (Auto"],
  [1, false, "interior", "Interior Elevations"],
  [1, true, "worksheet", "Worksheets"],
  [2, false, "worksheetItem", "Location Plan (Inde"],
  [2, false, "worksheetItem", "Site Survey (Indepen"],
  [1, false, "detail", "Details"],
  [1, false, "doc3d", "3D Documents"],
  [1, true, "box3dFill", "3D"],
  [2, false, "box3d", "Generic Perspective"],
  [2, false, "axo", "Generic Axonometry"],
  [1, true, "schedule", "Schedules"],
  [2, true, "hatch", "Elements"],
  [3, false, "schedule", "01 Door Schedule"],
  [3, false, "schedule", "02 Door List"],
  [3, false, "schedule", "03 Window Sched"],
  [3, false, "schedule", "04 Window List"],
  [3, false, "schedule", "05 Sanitaryware S"],
  [3, false, "schedule", "06 Sanitaryware L"],
  [3, false, "schedule", "07 Zone List"],
  [3, false, "schedule", "08 Zones Categor"],
  [3, false, "schedule", "09 Wall List"],
  [3, false, "schedule", ""],
];

const designTools = [
  "wall", "column", "beam", "slab", "roof", "shell", "stair", "railing", "curtain", "door", "window",
  "skylight", "opening", "zone", "mesh", "morph", "chair", "lamp", "equipment", "curtainCorner", "panel",
];

const quickOptions: [string, string][] = [
  ["fit", "101%"],
  ["orient", "0.0000°"],
  ["scale", "1:100"],
  ["layerStack", "A-00-All layers"],
  ["partial", "Entire Model"],
  ["pen", "00-Working"],
  ["frame", "00-Working"],
  ["override", "No Overrides"],
  ["reno", "05-Proposed"],
  ["structure", "Main Model Only"],
  ["dimension", "01-Millimeter"],
];

const penSets = ["00-Working", "01-Print 1:100", "02-Print 1:50", "03-Print 1:20", "04-Print 1:5"];

/* ---------- parts ---------- */

type MenuToolProps = { name: string; on?: boolean; w?: number; gap?: number; caret?: number; dim?: boolean };

const ToolWithMenu = ({ name, on, w, gap, caret = 18, dim }: MenuToolProps) => (
  <>
    <Tool $on={on} $w={w} $gap={gap} aria-label={name}>
      <Icon name={name} size={22} />
    </Tool>
    <Tool $on={on} $w={caret} aria-label={`${name} options`}>
      <Caret $dim={dim} />
    </Tool>
  </>
);

const Plain = ({ names }: { names: string[] }) => (
  <>
    {names.map((n) => (
      <Tool key={n} aria-label={n}>
        <Icon name={n} size={22} />
      </Tool>
    ))}
  </>
);

const Walls = ({ spans }: { spans: [number, number][] }) => (
  <>
    {spans.map(([a, b]) => (
      <rect key={a} x={a + 1} y="586" width={b - a - 2} height="20" fill="#e4e4e4" stroke="#000" strokeWidth="2" />
    ))}
  </>
);

const WindowMark = ({ x, to }: { x: number; to: number }) => (
  <g stroke="#d06f2a" fill="none">
    <rect x={x} y="584" width={to - x} height="4" fill="#8b4a22" stroke="none" />
    <path d={`M${x} 588.500H${to}M${x} 605.500H${to}`} />
    <path stroke="#fff" strokeDasharray="2 1" d={`M${(x + to) / 2 - 3} 585.500h6M${x + 1} 585.500h2M${to - 3} 585.500h2`} />
  </g>
);

const DoorMark = ({ hinge, end }: { hinge: number; end: number }) => {
  const s = end > hinge ? 1 : -1;
  return (
    <g stroke="#f08a3c" fill="none">
      <rect x={hinge + (s > 0 ? 0.5 : -2.5)} y="542.500" width="2" height="43" fill="#fff" />
      <path d={`M${hinge + 2 * s} 543.500A42 42 0 0 ${s > 0 ? 1 : 0} ${end} 585`} />
      <path d={`M${hinge + 0.5 * s} 585v22M${end - 0.5 * s} 585v22`} />
      <path stroke={ink} fill="#fff" d={`M${hinge - 1} 588.500h2v4h-2zM${end - 1} 588.500h2v4h-2z`} />
    </g>
  );
};

const Drawing = () => (
  <Plan viewBox="44 139 1692 837" preserveAspectRatio="xMinYMin meet" role="img" aria-label="Ground floor plan">
    <g fill="#f5f5f5">
      <rect x="874" y="139" width="32" height="16" />
      <rect x="874" y="959" width="32" height="17" />
      <rect x="45" y="541" width="16" height="32" rx="3" />
      <rect x="1720" y="541" width="16" height="32" rx="3" />
    </g>
    <g stroke="#eea568" fill="none" strokeDasharray="5 2">
      <path d="M877 148.500h27M877 966.500h27M53.500 544v27M1726.500 544v27" />
    </g>
    <Walls spans={[[113, 180], [255, 320], [397, 470], [546, 1218], [1262, 1310], [1353, 1454], [1498, 1641]]} />
    <WindowMark x={180} to={255} />
    <WindowMark x={320} to={397} />
    <WindowMark x={470} to={546} />
    <DoorMark hinge={1218} end={1262} />
    <DoorMark hinge={1353} end={1310} />
    <DoorMark hinge={1454} end={1498} />
    <path d="M862 874h12v52h5l-11 46-11-46h5z" fill="#fff" stroke="#ff7f27" strokeWidth="4" />
    <path d="M863 952h10l-5 24z" fill="#ff7f27" />
  </Plan>
);

const PensDialog = () => (
  <Dialog role="dialog" aria-labelledby="pens-title">
    <TitleBar>
      <Svg width="14" height="14" viewBox="0 0 14 14" fill="none" aria-hidden="true">
        <path d="M3 12C4 5 9 0 12 8v5H3z" fill="#e4ebf7" />
        <path d="M1 13C3 6 6 1 9 1.500c2 0 3 2 3 4" stroke="#4a7bd0" strokeWidth="2" />
        <path d="M12 8v2" stroke="#27458a" strokeWidth="2" />
      </Svg>
      <TitleText id="pens-title">Pens &amp; Color (Model Views)</TitleText>
      <Controls>
        <TitleButton>?</TitleButton>
        <TitleButton aria-label="Close">
          <Svg width="11" height="11" viewBox="0 0 11 11" stroke="#000">
            <path d="M.5.5l10 10M10.500.5l-10 10" />
          </Svg>
        </TitleButton>
      </Controls>
    </TitleBar>
    <Body>
      <Bar>
        <BarText $pad={4}>AVAILABLE PEN SETS</BarText>
      </Bar>
      <Caption $top={7}>Select a Pen Set for Model views:</Caption>
      <SearchBox $m="0">
        <Icon name="search" size={16} />
        <SearchInput placeholder="Search Pen Sets" aria-label="Search Pen Sets" />
      </SearchBox>
      <ListWrap>
        <List>
          {penSets.map((p, i) => (
            <Item key={p} $on={i === 0}>
              {p}
            </Item>
          ))}
        </List>
        <ListScroll>
          <Chevron dir="up" color="#b5b5b5" />
          <Chevron dir="down" color="#b5b5b5" />
        </ListScroll>
      </ListWrap>
      <Actions>
        <Push $w={148} $off disabled>
          Store as...
        </Push>
        <Push $w={148}>Rename...</Push>
        <Push $w={148}>Delete</Push>
        <Push $w={28} aria-label="Export pen set">
          <Icon name="exportDoc" />
        </Push>
      </Actions>
      <Bar>
        <Caret />
        <Icon name="pen" narrow />
        <BarText>00-WORKING</BarText>
      </Bar>
      <PenArea>
        <PenGrid>
          <PenCells>
            {pens.map((c, i) => (
              <Pen key={i} $c={`#${c}`} $on={i === 62} aria-label={`Pen ${i + 1}`}>
                {i === 62 && (
                  <Svg width="14" height="14" viewBox="0 0 14 14" aria-hidden="true">
                    <path d="M1.500 1.500h8l3 3v8h-8l-3-3z" fill="#ff9955" stroke="#000" />
                  </Svg>
                )}
              </Pen>
            ))}
          </PenCells>
        </PenGrid>
        <PenSide>
          <PenTop>
            <Swatch aria-label="Pen color" />
            <Icon name="pen" narrow />
            <PenNumber>63</PenNumber>
          </PenTop>
          <Caption $top={14} as="label" htmlFor="weight">
            Pen Weight:
          </Caption>
          <Inline>
            <Field id="weight" $w={90} $h={23} defaultValue="0.18" />
            <Push $w={13} $h={13} aria-label="Pen weights">
              <Caret $dir="right" />
            </Push>
            <span>mm</span>
          </Inline>
          <Caption $top={14} as="label" htmlFor="desc">
            Description:
          </Caption>
          <Field id="desc" $h={23} defaultValue="Openings Symbols&amp;Separators" />
        </PenSide>
      </PenArea>
      <Divider />
      <Confirm>
        <Push $w={88}>Cancel</Push>
        <Push $w={88} $primary>
          OK
        </Push>
      </Confirm>
    </Body>
    <Resize width="8" height="8" viewBox="0 0 8 8" fill="#bcbcbc" aria-hidden="true">
      <path d="M6 0h2v2H6zM6 3h2v2H6zM6 6h2v2H6zM3 3h2v2H3zM3 6h2v2H3zM0 6h2v2H0z" />
    </Resize>
  </Dialog>
);

const InfoBox = () => (
  <InfoBar>
    <Section>
      <SectionLabel>Main:</SectionLabel>
      <SectionBody $end>
        <Small>Default Settings</Small>
        <Push $w={48} $h={28} aria-label="Door settings">
          <Icon name="door" />
          <PushDivider />
          <Caret />
        </Push>
      </SectionBody>
    </Section>
    <Section>
      <SectionLabel>Element:</SectionLabel>
      <SectionBody $end>
        <Strong>Door 27</Strong>
        <Push $w={13} $h={28} aria-label="Choose element">
          <Caret $dir="right" />
        </Push>
      </SectionBody>
    </Section>
    <Section>
      <SectionLabel>Anchor Point:</SectionLabel>
      <SectionBody>
        {["anchorMid", "anchorLeft", "anchorRight"].map((n, i) => (
          <Tool key={n} $w={44} $on={i === 0} aria-label={n}>
            <Icon name={n} />
          </Tool>
        ))}
      </SectionBody>
    </Section>
    <Section>
      <SectionLabel>Size:</SectionLabel>
      <SectionBody $gap={4}>
        <Icon name="size" w={38} h={36} />
        <Stack>
          <Line>
            <Field $w={113} defaultValue="900" aria-label="Width" />
            <Push $w={13} $h={13} aria-label="Width values">
              <Caret $dir="right" />
            </Push>
          </Line>
          <Line>
            <Field $w={113} defaultValue="2100" aria-label="Height" />
            <Push $w={13} $h={13} aria-label="Height values">
              <Caret $dir="right" />
            </Push>
          </Line>
        </Stack>
      </SectionBody>
    </Section>
    <Section>
      <SectionLabel>Sill or Header Height:</SectionLabel>
      <SectionBody $gap={5} $end>
        <Spacer />
        <Icon name="sill" w={34} h={34} />
        <Stack>
          <Line>
            <span>Sill to Story 0</span>
            <Push $w={13} $h={13} aria-label="Sill reference">
              <Caret $dir="right" />
            </Push>
          </Line>
          <Field $w={132} defaultValue="0" aria-label="Sill height" />
        </Stack>
      </SectionBody>
    </Section>
    <Section>
      <SectionLabel>Reveal Depth:</SectionLabel>
      <SectionBody $gap={4} $end>
        <Spacer />
        <Icon name="reveal" w={34} h={30} />
        <Stack>
          <Line>
            <span>Reveal to Wall Face</span>
            <Push $w={13} $h={13} aria-label="Reveal reference">
              <Caret $dir="right" />
            </Push>
          </Line>
          <Field $w={132} defaultValue="0" aria-label="Reveal depth" />
        </Stack>
      </SectionBody>
    </Section>
    <Section>
      <SectionLabel>Flip:</SectionLabel>
      <SectionBody $end>
        <Spacer />
        <Icon name="flip" w={40} h={36} />
        <Push $w={131} $h={28} $off disabled>
          Flip
        </Push>
      </SectionBody>
    </Section>
    <Section>
      <SectionLabel>Marker Type:</SectionLabel>
      <SectionBody $gap={9} $end>
        <Spacer />
        <Icon name="marker" w={26} h={22} />
        <Push $w={131} $h={28} $start>
          No Marker
          <Spacer />
          <Caret $dir="right" />
        </Push>
      </SectionBody>
    </Section>
    <Section>
      <SectionLabel>Floor Plan and Section:</SectionLabel>
      <SectionBody $end>
        <Push $w={175} $h={28} $start>
          <Icon name="planSection" narrow />
          Floor Plan and Section...
          <Spacer />
          <Caret $dir="right" />
        </Push>
      </SectionBody>
    </Section>
    <Section>
      <SectionLabel>Opening Plane:</SectionLabel>
      <SectionBody $end>
        <SelectBox>
          <Icon name="openingPlane" />
          <Select aria-label="Opening plane">
            <option>Associated to Wall</option>
          </Select>
          <Chevron dir="down" weight={1} />
        </SelectBox>
      </SectionBody>
    </Section>
    <Section>
      <SectionLabel>Crop:</SectionLabel>
      <SectionBody>
        <Faded>Door Cropping</Faded>
      </SectionBody>
    </Section>
  </InfoBar>
);

const NavigatorPanel = () => (
  <Navigator>
    <Handle $w={68} />
    <NavTools>
      <Tool $on $w={30} aria-label="Project map">
        <Icon name="house" />
      </Tool>
      <Rule $wide />
      {["viewMap", "layoutBook", "publisher"].map((n) => (
        <Tool key={n} $w={30} aria-label={n}>
          <Icon name={n} />
        </Tool>
      ))}
      <Spacer />
      <Push $w={34} aria-label="Navigator options">
        <Svg width="12" height="12" viewBox="0 0 12 12" stroke="#222">
          <path d="M0 2.500h12M0 6.500h12M0 10.500h12" />
        </Svg>
        <Caret $dir="right" />
      </Push>
    </NavTools>
    <SearchBox $m="5px 0 2px 2px">
      <Icon name="search" size={16} />
      <SearchInput placeholder="Search Project Map" aria-label="Search Project Map" />
    </SearchBox>
    <TreeWrap>
      <Tree>
        {tree.map(([depth, open, icon, text], i) => (
          <Node key={i} $depth={depth} $on={i === 4}>
            <NodeArrow>{open && <Chevron dir="down" />}</NodeArrow>
            <Icon name={icon} narrow />
            <NodeText>{text}</NodeText>
          </Node>
        ))}
      </Tree>
      <VScroll>
        <Chevron dir="up" />
        <VThumb />
        <Chevron dir="down" />
      </VScroll>
    </TreeWrap>
    <HScroll>
      <Chevron dir="left" />
      <HThumb />
      <Chevron dir="right" />
    </HScroll>
    <NavActions>
      {["plus", "props", "remove"].map((n) => (
        <button key={n} aria-label={n}>
          <Icon name={n} />
        </button>
      ))}
    </NavActions>
    <PropsHead>
      <Caret />
      Properties
    </PropsHead>
    <PropRow>
      <Icon name="folder" narrow />
      <PropNum>0.</PropNum>
      <Field defaultValue="GF-Ground Floor" />
    </PropRow>
    <SettingsRow>
      <Push $grow>Settings...</Push>
    </SettingsRow>
  </Navigator>
);

export default function App() {
  return (
    <Shell>
      <Global />
      <MenuBar>
        {menus.map((m) => (
          <MenuItem key={m}>{m}</MenuItem>
        ))}
        <WindowControls>
          <Svg width="40" height="10" viewBox="0 0 40 10" fill="none" stroke="#a6a6a6" strokeWidth="2" aria-hidden="true">
            <path d="M2 8h7M17 4h5v5h-5zM19 1h5v6M33 2l5 6M38 2l-5 6" />
          </Svg>
        </WindowControls>
      </MenuBar>
      <ToolBar>
        <Grip />
        <Plain names={["undo", "redo"]} />
        <Rule />
        <Plain names={["pick", "dropper", "syringe"]} />
        <Rule />
        <ToolWithMenu name="setsquare" on w={31} caret={15} />
        <ToolWithMenu name="snap" on w={31} caret={15} />
        <ToolWithMenu name="tracker" on w={31} caret={15} />
        <ToolWithMenu name="grid" gap={4} />
        <Plain names={["planeH", "planeV"]} />
        <ToolWithMenu name="layers" gap={2} />
        <ToolWithMenu name="weight" gap={3} caret={16} dim />
        <Tool $on aria-label="suspend">
          <Icon name="suspend" size={22} />
        </Tool>
        <Plain names={["ruler", "cross"]} />
        <Tool $on aria-label="group">
          <Icon name="group" size={22} />
        </Tool>
        <ToolWithMenu name="cutbox" gap={3} caret={20} />
        <ToolWithMenu name="north" gap={2} caret={18} />
        <Rule />
        <Plain names={["scissors", "tools", "adjust", "corner", "fillet", "resize", "roofing"]} />
        <Rule />
        <Plain names={["flag", "flagList", "cloud"]} />
        <Rule />
        <Plain names={["modelCheck"]} />
      </ToolBar>
      <InfoBox />
      <Main>
        <ToolBox>
          <ToolList>
            <Handle $w={18} />
            {["arrow", "marquee"].map((n) => (
              <BoxTool key={n} aria-label={n}>
                <Icon name={n} />
              </BoxTool>
            ))}
            <Group>Design</Group>
            {designTools.map((n) => (
              <BoxTool key={n} $on={n === "door"} aria-label={n}>
                <Icon name={n} />
              </BoxTool>
            ))}
            <Group>Viewpoi</Group>
            {["secTool", "elevTool", "ieTool", "wsTool"].map((n) => (
              <BoxTool key={n} aria-label={n}>
                <Icon name={n} />
              </BoxTool>
            ))}
          </ToolList>
          <Group $last>Docume</Group>
        </ToolBox>
        <Centre>
          <Tabs>
            <TabIcon $w={26} aria-label="Tab overview">
              <Icon name="quad" />
            </TabIcon>
            <Tab $on>
              <Icon name="story" narrow />
              [0. GF-Ground Floor]
              <Close aria-label="Close tab">
                <Svg width="7" height="7" viewBox="0 0 8 8" stroke="#222" strokeWidth="2">
                  <path d="M1 1l6 6M7 1l-6 6" />
                </Svg>
              </Close>
            </Tab>
            <Tab>
              <Icon name="lighthouse" narrow />
              [Action Center]
            </Tab>
            <Tab>
              <Icon name="box3d" narrow />
              [3D / All]
            </Tab>
            <TabIcon $w={50} $light aria-label="View options">
              <Icon name="houseList" />
              <Caret />
            </TabIcon>
          </Tabs>
          <Canvas>
            <Drawing />
            <PensDialog />
          </Canvas>
          <StatusBar>
            <ZoomTools>
              {["zoomBack", "zoomFwd", "zoomIn"].map((n) => (
                <Tool key={n} $w={23} aria-label={n}>
                  <Icon name={n} size={22} />
                </Tool>
              ))}
            </ZoomTools>
            {quickOptions.map(([icon, text], i) => (
              <Cell key={i}>
                <Icon name={icon} />
                <CellText>{text}</CellText>
                <Caret $dir="right" />
              </Cell>
            ))}
          </StatusBar>
        </Centre>
        <NavigatorPanel />
      </Main>
      <Footer>
        <span>Click on a Wall to Place Door Centerpoint.</span>
        <Spacer />
        <Icon name="windows" narrow />
        <Brand>
          <BrandMark>GRAPHISOFT ID</BrandMark>
        </Brand>
      </Footer>
      <Edge />
    </Shell>
  );
}
